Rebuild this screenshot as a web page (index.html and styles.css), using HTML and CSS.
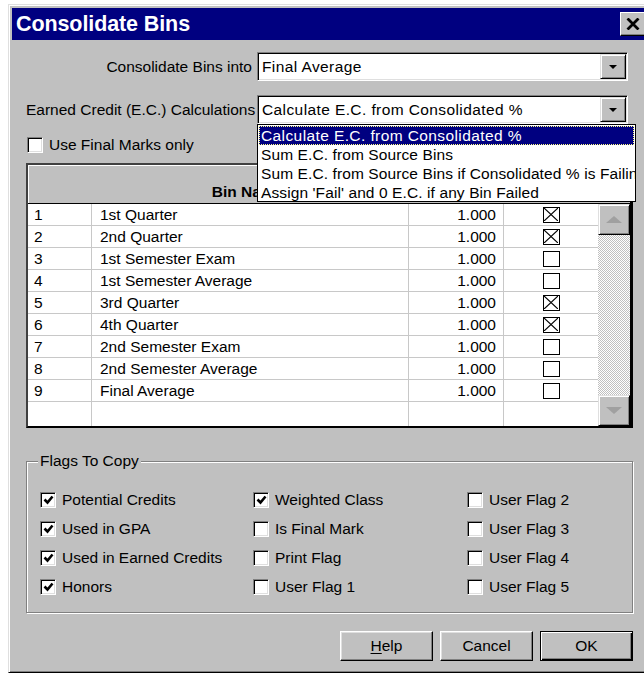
FILE: index.html
```html
<!DOCTYPE html>
<html lang="en">
<head>
<meta charset="utf-8">
<title>Consolidate Bins</title>
<link rel="stylesheet" href="styles.css">
</head>
<body>
<div class="window">
  <div class="titlebar">
    <span class="title">Consolidate Bins</span>
    <span class="close-btn">
      <svg width="14" height="12" viewBox="0 0 14 12"><path d="M1.5 0.5 L12.5 11.5 M12.5 0.5 L1.5 11.5" stroke="#000" stroke-width="2.8" fill="none"/></svg>
    </span>
  </div>

  <div class="content">
    <div class="field">
      <span class="field-label">Consolidate Bins into</span>
      <div class="combo">
        <span class="combo-text">Final Average</span>
        <span class="combo-btn"><i class="tri-down"></i></span>
      </div>
    </div>

    <div class="field field-ec">
      <span class="field-label">Earned Credit (E.C.) Calculations</span>
      <div class="combo">
        <span class="combo-text">Calculate E.C. from Consolidated %</span>
        <span class="combo-btn"><i class="tri-down"></i></span>
        <ul class="dropdown">
          <li class="selected"><span>Calculate E.C. from Consolidated %</span></li>
          <li><span>Sum E.C. from Source Bins</span></li>
          <li><span>Sum E.C. from Source Bins if Consolidated % is Failing</span></li>
          <li><span>Assign 'Fail' and 0 E.C. if any Bin Failed</span></li>
        </ul>
      </div>
    </div>

    <div class="check-row">
      <span class="check3d"></span>
      <span>Use Final Marks only</span>
    </div>

    <div class="grid">
      <div class="grid-head">
        <span class="head-cell"></span>
        <span class="head-cell head-name">Bin Name</span>
        <span class="head-cell"></span>
        <span class="head-cell"></span>
      </div>
      <div class="grid-body">
        <div class="rows">
          <div class="row"><span class="c-num">1</span><span class="c-name">1st Quarter</span><span class="c-weight">1.000</span><span class="c-flag"><i class="xbox on"></i></span></div>
          <div class="row"><span class="c-num">2</span><span class="c-name">2nd Quarter</span><span class="c-weight">1.000</span><span class="c-flag"><i class="xbox on"></i></span></div>
          <div class="row"><span class="c-num">3</span><span class="c-name">1st Semester Exam</span><span class="c-weight">1.000</span><span class="c-flag"><i class="xbox"></i></span></div>
          <div class="row"><span class="c-num">4</span><span class="c-name">1st Semester Average</span><span class="c-weight">1.000</span><span class="c-flag"><i class="xbox"></i></span></div>
          <div class="row"><span class="c-num">5</span><span class="c-name">3rd Quarter</span><span class="c-weight">1.000</span><span class="c-flag"><i class="xbox on"></i></span></div>
          <div class="row"><span class="c-num">6</span><span class="c-name">4th Quarter</span><span class="c-weight">1.000</span><span class="c-flag"><i class="xbox on"></i></span></div>
          <div class="row"><span class="c-num">7</span><span class="c-name">2nd Semester Exam</span><span class="c-weight">1.000</span><span class="c-flag"><i class="xbox"></i></span></div>
          <div class="row"><span class="c-num">8</span><span class="c-name">2nd Semester Average</span><span class="c-weight">1.000</span><span class="c-flag"><i class="xbox"></i></span></div>
          <div class="row"><span class="c-num">9</span><span class="c-name">Final Average</span><span class="c-weight">1.000</span><span class="c-flag"><i class="xbox"></i></span></div>
          <div class="row row-empty"><span class="c-num"></span><span class="c-name"></span><span class="c-weight"></span><span class="c-flag"></span></div>
        </div>
        <div class="vscroll">
          <span class="sb-btn"><i class="tri-up"></i></span>
          <span class="sb-track"></span>
          <span class="sb-btn"><i class="tri-dn"></i></span>
        </div>
      </div>
    </div>

    <div class="group">
      <span class="group-title">Flags To Copy</span>
      <div class="flags">
        <label class="flag"><span class="check3d on"></span>Potential Credits</label>
        <label class="flag"><span class="check3d on"></span>Weighted Class</label>
        <label class="flag"><span class="check3d"></span>User Flag 2</label>
        <label class="flag"><span class="check3d on"></span>Used in GPA</label>
        <label class="flag"><span class="check3d"></span>Is Final Mark</label>
        <label class="flag"><span class="check3d"></span>User Flag 3</label>
        <label class="flag"><span class="check3d on"></span>Used in Earned Credits</label>
        <label class="flag"><span class="check3d"></span>Print Flag</label>
        <label class="flag"><span class="check3d"></span>User Flag 4</label>
        <label class="flag"><span class="check3d on"></span>Honors</label>
        <label class="flag"><span class="check3d"></span>User Flag 1</label>
        <label class="flag"><span class="check3d"></span>User Flag 5</label>
      </div>
    </div>

    <div class="buttons">
      <span class="btn"><u>H</u>elp</span>
      <span class="btn">Cancel</span>
      <span class="btn btn-default">OK</span>
    </div>
  </div>
</div>
</body>
</html>
```

FILE: styles.css
```css
* {
  box-sizing: border-box;
}

html,
body {
  margin: 0;
  padding: 0;
  overflow: hidden;
}

body {
  width: 644px;
  height: 673px;
  background: #ffffff;
  font-family: "Liberation Sans", Arial, sans-serif;
  font-size: 15.5px;
  color: #000;
}

/* dialog frame */
.window {
  margin: 4px 0 0 8px;
  width: 644px;
  height: 669px;
  padding: 3px;
  background: #c0c0c0;
  border-style: solid;
  border-width: 1px;
  border-color: #dfdfdf #000 #000 #dfdfdf;
  box-shadow: inset 1px 1px #fff, inset -1px -1px #808080;
}

.titlebar {
  height: 32px;
  display: flex;
  align-items: center;
  padding-left: 4px;
  background: #000080;
  color: #fff;
}

.title {
  flex: 1;
  font-size: 21.5px;
  font-weight: bold;
  letter-spacing: -0.1px;
}

.close-btn {
  width: 26px;
  height: 24px;
  margin-right: 2px;
  display: flex;
  align-items: center;
  justify-content: center;
  background: #c0c0c0;
  border-style: solid;
  border-width: 1px;
  border-color: #fff #000 #000 #fff;
  box-shadow: inset -1px -1px #808080;
}

.content {
  padding: 12px 0 0 14px;
}

/* labelled combo boxes */
.field {
  display: grid;
  grid-template-columns: 226px 371px;
  column-gap: 5px;
  align-items: center;
  height: 29px;
}

.field-ec {
  margin-top: 14px;
}

.field-label {
  text-align: right;
  white-space: nowrap;
}

.combo {
  position: relative;
  height: 29px;
  display: flex;
  align-items: center;
  padding-left: 3px;
  background: #fff;
  border-style: solid;
  border-width: 1px;
  border-color: #808080 #fff #fff #808080;
  box-shadow: inset 1px 1px #000, inset -1px -1px #dfdfdf;
}

.combo-text {
  padding-left: 1px;
  white-space: nowrap;
  letter-spacing: 0.4px;
}

.combo-btn {
  position: absolute;
  top: 1px;
  right: 1px;
  bottom: 1px;
  width: 26px;
  display: flex;
  align-items: center;
  justify-content: center;
  background: #c0c0c0;
  border-style: solid;
  border-width: 1px;
  border-color: #dfdfdf #000 #000 #dfdfdf;
  box-shadow: inset 1px 1px #fff, inset -1px -1px #808080;
}

.tri-down {
  width: 0;
  height: 0;
  border-left: 4px solid transparent;
  border-right: 4px solid transparent;
  border-top: 4px solid #000;
}

/* open list of the E.C. combo */
.dropdown {
  position: absolute;
  z-index: 5;
  top: 28px;
  left: -1px;
  width: 379px;
  height: 78px;
  margin: 0;
  padding: 1px;
  list-style: none;
  background: #fff;
  border: 1px solid #000;
  overflow: hidden;
}

.dropdown li {
  height: 19px;
  line-height: 20px;
  padding-left: 2px;
  white-space: nowrap;
  letter-spacing: 0.1px;
}

.dropdown li.selected {
  background: #000080;
  color: #fff;
  outline: 1px dotted #ffff80;
  outline-offset: -1px;
  letter-spacing: 0.4px;
}

.check-row {
  margin-top: 13px;
  height: 16px;
  display: flex;
  align-items: center;
  gap: 6px;
  padding-left: 1px;
}

/* sunken checkbox */
.check3d {
  flex: none;
  position: relative;
  width: 16px;
  height: 16px;
  background: #fff;
  border-style: solid;
  border-width: 1px;
  border-color: #808080 #fff #fff #808080;
  box-shadow: inset 1px 1px #000, inset -1px -1px #dfdfdf;
}

.check3d.on::after {
  content: "";
  position: absolute;
  left: 2px;
  top: 2px;
  width: 11px;
  height: 10px;
  background: url("data:image/svg+xml;utf8,<svg xmlns='http://www.w3.org/2000/svg' width='11' height='10' viewBox='0 0 11 10'><path d='M1.5 4.5 L4.5 7.5 L9.5 1.5' stroke='black' stroke-width='2.6' fill='none'/></svg>") no-repeat;
}

/* bins grid */
.grid {
  margin-top: 10px;
  width: 607px;
  border-style: solid;
  border-width: 2px 3px 2px 2px;
  border-color: #404040 #000 #000 #404040;
  background: #fff;
}

.grid-head {
  height: 39px;
  display: grid;
  grid-template-columns: 64px 317px 95px 94px 32px;
  background: #c0c0c0;
  border-bottom: 1px solid #000;
  box-shadow: inset 1px 1px #fff;
}

.head-cell {
  display: flex;
  align-items: flex-end;
  justify-content: center;
  padding-bottom: 2px;
}

.head-name {
  font-weight: bold;
  padding-right: 6px;
}

.grid-body {
  display: flex;
  height: 222px;
}

.rows {
  width: 570px;
}

.row {
  display: grid;
  grid-template-columns: 64px 317px 95px 94px;
  height: 22px;
  border-bottom: 1px solid #c8c8c8;
}

.row-empty {
  height: 24px;
  border-bottom: none;
}

.row > span {
  display: flex;
  align-items: center;
  border-right: 1px solid #c8c8c8;
  white-space: nowrap;
}

.row > span:last-child {
  border-right: none;
}

.c-num {
  padding-left: 6px;
}

.c-name {
  padding-left: 8px;
}

.c-weight {
  justify-content: flex-end;
  padding-right: 7px;
}

.c-flag {
  justify-content: center;
}

/* flat grid checkbox with cross */
.xbox {
  display: block;
  width: 17px;
  height: 16px;
  border: 1.5px solid #000;
  background: #fff;
}

.xbox.on {
  background: #fff url("data:image/svg+xml;utf8,<svg xmlns='http://www.w3.org/2000/svg' width='14' height='13' viewBox='0 0 14 13'><path d='M0 0 L14 13 M14 0 L0 13' stroke='black' stroke-width='1.2' fill='none'/></svg>") no-repeat center;
}

.vscroll {
  width: 32px;
  display: flex;
  flex-direction: column;
}

.sb-btn {
  flex: none;
  height: 31px;
  display: flex;
  align-items: center;
  justify-content: center;
  background: #c0c0c0;
  border-style: solid;
  border-width: 1px;
  border-color: #dfdfdf #000 #000 #dfdfdf;
  box-shadow: inset 1px 1px #fff, inset -1px -1px #808080;
}

.sb-track {
  flex: 1;
  background: repeating-conic-gradient(#c0c0c0 0 25%, #fff 0 50%) 0 0 / 2px 2px;
}

.tri-up,
.tri-dn {
  width: 0;
  height: 0;
  border-left: 8px solid transparent;
  border-right: 8px solid transparent;
}

.tri-up {
  border-bottom: 7px solid #a0a0a0;
}

.tri-dn {
  border-top: 7px solid #a0a0a0;
}

/* etched group box */
.group {
  position: relative;
  margin-top: 33px;
  width: 607px;
  height: 152px;
  border: 1px solid #808080;
  box-shadow: inset 1px 1px #fff, 1px 1px #fff;
}

.group-title {
  position: absolute;
  top: -10px;
  left: 11px;
  padding: 0 2px;
  line-height: 18px;
  background: #c0c0c0;
}

.flags {
  display: grid;
  grid-template-columns: 213px 214px 170px;
  grid-auto-rows: 29px;
  padding: 23px 0 0 13px;
}

.flag {
  display: flex;
  align-items: center;
  gap: 6px;
  white-space: nowrap;
}

/* dialog buttons */
.buttons {
  margin-top: 18px;
  width: 607px;
  display: flex;
  justify-content: flex-end;
  gap: 7px;
}

.btn {
  width: 93px;
  height: 30px;
  display: flex;
  align-items: center;
  justify-content: center;
  background: #c0c0c0;
  border-style: solid;
  border-width: 1px;
  border-color: #fff #000 #000 #fff;
  box-shadow: inset -1px -1px #808080, inset 1px 1px #dfdfdf;
}

.btn u {
  text-decoration-thickness: 1px;
  text-underline-offset: 2px;
}

.btn-default {
  border: 1px solid #000;
  box-shadow: inset 1px 1px #fff, inset -1px -1px #000, inset -2px -2px #808080;
}
```
